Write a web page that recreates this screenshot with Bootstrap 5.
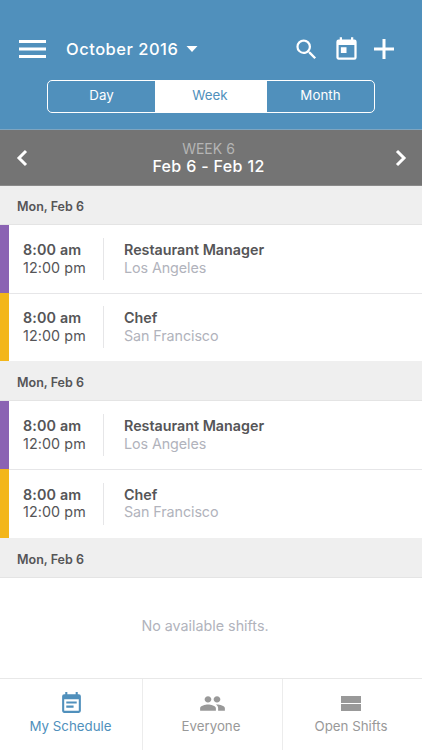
<!DOCTYPE html>
<html lang="en">
<head>
<meta charset="utf-8">
<meta name="viewport" content="width=device-width, initial-scale=1">
<title>My Schedule</title>
<link href="https://cdn.jsdelivr.net/npm/bootstrap@5.3.0/dist/css/bootstrap.min.css" rel="stylesheet">
<style>
:root{--brand:#5090bc}
body{font-family:Inter,"Liberation Sans",sans-serif;color:#555557;font-size:14.3px;height:750px;overflow:hidden}
svg{display:block;flex:none}
.top-bar{background:var(--brand);height:130px;padding:32px 28.500px 0 19px;border-bottom:1px solid #7ea5c0}
.top-tools{height:34px}
.month-btn{font-size:16.5px;font-weight:500;letter-spacing:.5px;margin-left:20px;line-height:20px}
.search-icon{margin-right:12.5px}
.cal-icon{margin-right:14px}
.range-switch{width:328px;height:33px;margin:14px 0 0 28px;border:1px solid #fff;border-radius:5px}
.range-switch .btn{--bs-btn-color:#fff;--bs-btn-active-color:var(--brand);--bs-btn-active-bg:#fff;--bs-btn-padding-x:0;--bs-btn-padding-y:0;--bs-btn-border-width:0;--bs-btn-font-size:13.3px;--bs-btn-line-height:29px;border-radius:0;flex:0 0 107px;padding-bottom:2px;letter-spacing:.05px}
.range-switch .btn.active{flex:0 0 112px;padding-right:2px}
.week-bar{background:#747474;height:56px;padding:0 14px 0 15px;border-bottom:1px solid #8a8a8a}
.week-title{margin-right:6px}
.week-no{font-size:14px;line-height:17px;color:#b5b5b5}
.week-range{font-size:16px;line-height:18px;font-weight:500;letter-spacing:.35px}
.day-head{background:#efefef;height:39px;padding-left:17px;font-size:12.5px;font-weight:600;border-bottom:1px solid #e4e4e4;padding-top:5px}
.day-head.tall{height:40px;padding-top:6px}
.shift{height:68px;border-left:9.5px solid}
.shift+.shift{box-shadow:inset 0 1px #e6e6e8}
.shift.late{height:69px}
.shift-a{border-left-color:#8b63b3}
.shift-b{border-left-color:#f3b61a}
.shift-time{width:95px;height:42px;padding:3px 0 0 14px;border-right:1px solid #e6e6e8;line-height:17.5px}
.shift-time .fw-semibold{letter-spacing:.15px}
.shift-time div+div{letter-spacing:.1px}
.shift-info{padding:3px 0 0 20px;height:42px;line-height:17.5px}
.shift-info .pale{letter-spacing:-.08px}
.pale{color:#b1b3bc}
.empty-note{height:100px;padding:0 12px 4px 0}
.tab-bar{height:72px;border-top:1px solid #e8e8e8;color:#999}
.tab-item{padding:12px 3px 0 0}
.tab-item+.tab-item{border-left:1px solid #ececec}
.tab-item.current{color:var(--brand);flex:0 0 142px;padding-right:1px}
.tab-text{font-size:13.3px;line-height:18px;margin-top:1px}
.current svg,.people-icon{margin-left:2px}
</style>
</head>
<body class="bg-white">
<header class="top-bar text-white">
  <div class="top-tools d-flex align-items-center">
    <svg width="27" height="20" viewBox="0 0 27 20" fill="#fff"><path d="M0 1h27v3H0zM0 8.500h27v3H0zM0 16h27v3H0z"/></svg>
    <span class="month-btn">October 2016</span>
    <svg class="ms-2" width="12" height="6" viewBox="0 0 12 6" fill="#fff"><path d="M.5 0h11L6 6z"/></svg>
    <div class="d-flex align-items-center ms-auto">
      <svg class="search-icon" width="27" height="27" viewBox="0 0 24 24" fill="#fff"><path d="M15.5 14h-.79l-.28-.27A6.471 6.471 0 0 0 16 9.5 6.5 6.5 0 1 0 9.5 16c1.61 0 3.09-.59 4.23-1.57l.27.28v.79l5 4.99L20.49 19l-4.99-5zm-6 0C7.01 14 5 11.99 5 9.5S7.01 5 9.5 5 14 7.01 14 9.5 11.99 14 9.5 14z"/></svg>
      <svg class="cal-icon" width="27" height="27" viewBox="0 0 24 24" fill="#fff"><path d="M19 3h-1V1h-2v2H8V1H6v2H5a2 2 0 0 0-2 2v14c0 1.100.9 2 2 2h14a2 2 0 0 0 2-2V5a2 2 0 0 0-2-2zm0 16H5V8h14v11zM7 10h5v5H7z"/></svg>
      <svg width="20" height="20" viewBox="0 0 20 20" fill="#fff"><path d="M8.500 0h3v8.500H20v3h-8.500V20h-3v-8.500H0v-3h8.500z"/></svg>
    </div>
  </div>
  <div class="range-switch d-flex overflow-hidden">
    <button class="btn" type="button">Day</button>
    <button class="btn active" type="button">Week</button>
    <button class="btn" type="button">Month</button>
  </div>
</header>
<section class="week-bar d-flex align-items-center justify-content-between text-white">
  <svg width="14" height="18" viewBox="0 0 14 18" fill="none" stroke="#fff" stroke-width="3"><path d="M11 2 4 9l7 7"/></svg>
  <div class="week-title text-center">
    <div class="week-no">WEEK 6</div>
    <div class="week-range">Feb 6 - Feb 12</div>
  </div>
  <svg width="14" height="18" viewBox="0 0 14 18" fill="none" stroke="#fff" stroke-width="3"><path d="m3 2 7 7-7 7"/></svg>
</section>
<main>
  <div class="day-head d-flex align-items-center">Mon, Feb 6</div>
  <div class="shift shift-a d-flex align-items-center">
    <div class="shift-time"><div class="fw-semibold">8:00 am</div><div>12:00 pm</div></div>
    <div class="shift-info"><div class="fw-semibold">Restaurant Manager</div><div class="pale">Los Angeles</div></div>
  </div>
  <div class="shift shift-b d-flex align-items-center">
    <div class="shift-time"><div class="fw-semibold">8:00 am</div><div>12:00 pm</div></div>
    <div class="shift-info"><div class="fw-semibold">Chef</div><div class="pale">San Francisco</div></div>
  </div>
  <div class="day-head tall d-flex align-items-center">Mon, Feb 6</div>
  <div class="shift shift-a d-flex align-items-center">
    <div class="shift-time"><div class="fw-semibold">8:00 am</div><div>12:00 pm</div></div>
    <div class="shift-info"><div class="fw-semibold">Restaurant Manager</div><div class="pale">Los Angeles</div></div>
  </div>
  <div class="shift shift-b late d-flex align-items-center">
    <div class="shift-time"><div class="fw-semibold">8:00 am</div><div>12:00 pm</div></div>
    <div class="shift-info"><div class="fw-semibold">Chef</div><div class="pale">San Francisco</div></div>
  </div>
  <div class="day-head tall d-flex align-items-center">Mon, Feb 6</div>
  <div class="empty-note pale d-flex align-items-center justify-content-center">No available shifts.</div>
</main>
<nav class="tab-bar row g-0">
  <div class="tab-item current col d-flex flex-column align-items-center">
    <svg width="25" height="25" viewBox="0 0 24 24" fill="currentColor"><path d="M17 10H7v2h10v-2zm2-7h-1V1h-2v2H8V1H6v2H5a2 2 0 0 0-2 2v14c0 1.100.9 2 2 2h14a2 2 0 0 0 2-2V5a2 2 0 0 0-2-2zm0 16H5V8h14v11zm-5-5H7v2h7v-2z"/></svg>
    <div class="tab-text">My Schedule</div>
  </div>
  <div class="tab-item col d-flex flex-column align-items-center">
    <svg class="people-icon" width="27" height="25" viewBox="0 0 24 24" fill="currentColor" preserveAspectRatio="none"><path d="M16 11c1.660 0 2.990-1.340 2.990-3S17.660 5 16 5s-3 1.340-3 3 1.340 3 3 3zm-8 0c1.660 0 2.990-1.340 2.990-3S9.660 5 8 5 5 6.340 5 8s1.340 3 3 3zm0 2c-2.330 0-7 1.170-7 3.500V19h14v-2.500c0-2.330-4.670-3.500-7-3.500zm8 0c-.290 0-.620.020-.970.050 1.160.840 1.970 1.970 1.970 3.450V19h6v-2.500c0-2.330-4.670-3.500-7-3.500z"/></svg>
    <div class="tab-text">Everyone</div>
  </div>
  <div class="tab-item col d-flex flex-column align-items-center">
    <svg width="20" height="25" viewBox="0 0 20 25" fill="currentColor"><path d="M0 5h20v7H0zM0 13h20v7H0z"/></svg>
    <div class="tab-text">Open Shifts</div>
  </div>
</nav>
<script src="https://cdn.jsdelivr.net/npm/bootstrap@5.3.0/dist/js/bootstrap.bundle.min.js"></script>
</body>
</html>
